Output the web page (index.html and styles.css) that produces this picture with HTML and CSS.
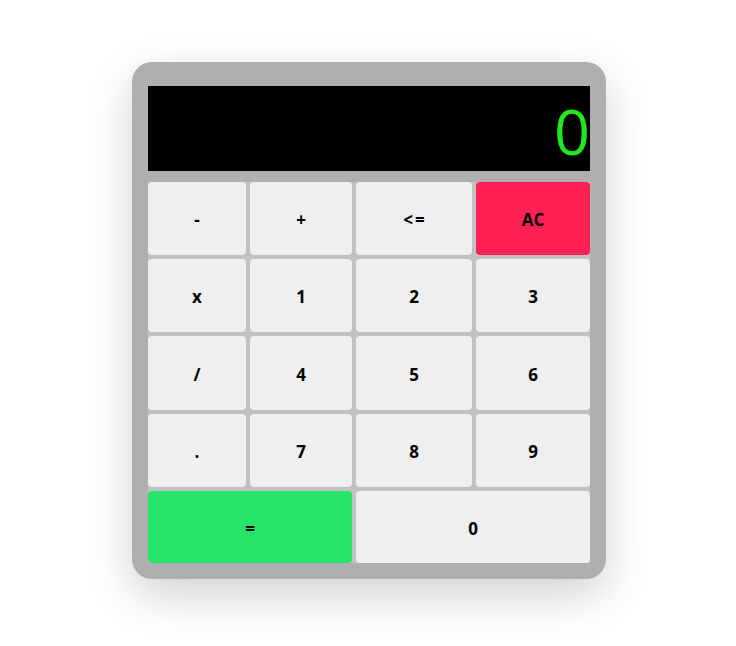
FILE: index.html
```html
<!DOCTYPE html>
<html>
<head>
<meta charset="utf-8">
<link rel="stylesheet" href="styles.css">
</head>
<body>
<div class="page">
  <div class="calc">
    <div class="display"><span class="value">0</span></div>
    <div class="keys">
      <button class="key">-</button>
      <button class="key">+</button>
      <button class="key key-bs">&lt;=</button>
      <button class="key key-ac">AC</button>
      <button class="key">x</button>
      <button class="key">1</button>
      <button class="key">2</button>
      <button class="key">3</button>
      <button class="key">/</button>
      <button class="key">4</button>
      <button class="key">5</button>
      <button class="key">6</button>
      <button class="key">.</button>
      <button class="key">7</button>
      <button class="key">8</button>
      <button class="key">9</button>
      <button class="key key-eq span2">=</button>
      <button class="key span2">0</button>
    </div>
  </div>
</div>
</body>
</html>
```
FILE: styles.css
```css
html, body {
  margin: 0;
  padding: 0;
  background: #ffffff;
}

.page {
  display: flex;
  justify-content: center;
  align-items: flex-start;
  padding: 62px 0 0 2px;
  min-height: 584px;
}

.calc {
  width: 442px;
  padding: 24px 16px 16px 16px;
  background: #afafaf;
  border-radius: 20px;
  box-shadow: 0 16px 45px rgba(0, 0, 0, 0.18);
}

.display {
  height: 85px;
  background: #000000;
  display: flex;
  justify-content: flex-end;
  align-items: flex-end;
}

.value {
  color: #1fe81f;
  font-family: "Open Sans", sans-serif;
  font-weight: 400;
  font-size: 63px;
  line-height: 80px;
  margin-right: 0;
}

.keys {
  margin-top: 11px;
  display: grid;
  grid-template-columns: 98px 102px 116px 114px;
  grid-template-rows: 73px 73px 74px 73px 72px;
  gap: 4px;
  background: #c1c1c1;
}

.key {
  border: none;
  margin: 0;
  padding: 2px 0 0 0;
  border-radius: 4px;
  background: #efefef;
  color: #000000;
  font-family: "Open Sans", sans-serif;
  font-weight: 700;
  font-size: 17px;
  display: flex;
  align-items: center;
  justify-content: center;
}

.key-bs {
  letter-spacing: 2px;
  padding-left: 2px;
}

.key-ac {
  background: #ff2153;
}

.key-eq {
  background: #26e46a;
}

.span2 {
  grid-column: span 2;
}
```
